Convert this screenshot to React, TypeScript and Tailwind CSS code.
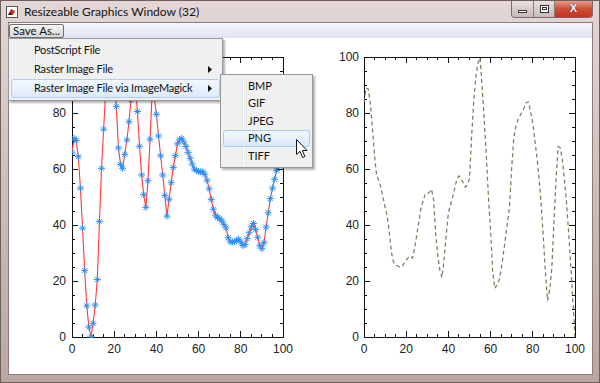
import React from "react";

type Pt = [number, number];

// keypoints read off the reference, in page x pixels → data value
const LEFT_KEYS: Pt[] = [
  [71, 66], [74, 73], [77, 66], [79, 56], [81, 43], [83, 28], [85, 15], [87, 5], [90, 0],
  [93, 7], [96, 18], [98, 34], [99, 51], [102, 69], [104, 85], [108, 102], [112, 98],
  [116, 79], [117, 69], [119, 62], [122, 60], [124, 66], [127, 73], [129, 81], [133, 95],
  [136, 83], [138, 71], [140, 60], [143, 50], [145, 46], [148, 61], [151, 88], [153, 86],
  [155, 81], [158, 70], [162, 57], [166, 43], [169, 52], [172, 60], [177, 70], [181, 71],
  [185, 68], [189, 64], [193, 60], [198, 59], [203, 59], [207, 55], [212, 46], [215, 43],
  [220, 42], [225, 39], [228, 34], [233, 34], [238, 35], [243, 32], [247, 36], [252, 41],
  [256, 37], [258, 33], [262, 31], [265, 39], [270, 51], [276, 60], [282, 67],
];

const RIGHT_KEYS: Pt[] = [
  [364, 84], [367, 91], [370, 85], [373, 72], [376, 58], [380, 55], [384, 48], [388, 42],
  [391, 31], [394, 26], [400, 25], [402, 25], [405, 27], [410, 29], [413, 28], [417, 37],
  [421, 46], [425, 51], [428, 51], [432, 53], [434, 48], [436, 35], [439, 25], [442, 21],
  [445, 31], [448, 44], [452, 49], [458, 58], [462, 56], [466, 53], [470, 57], [472, 75],
  [475, 91], [478, 98], [480, 100], [483, 85], [486, 67], [489, 46], [491, 36], [493, 21],
  [495, 17], [500, 21], [505, 34], [510, 48], [513, 70], [517, 77], [523, 81], [528, 85],
  [533, 76], [538, 61], [542, 44], [545, 25], [548, 11], [552, 25], [555, 50], [558, 68],
  [560, 68], [563, 62], [567, 46], [570, 30], [572, 19], [574, 5], [575, 0],
];

const STEP = 2.11;
const Y0 = 337;
const YS = 2.8;

function interp(keys: Pt[], px: number) {
  for (let i = 0; i < keys.length - 1; i++) {
    const [x1, v1] = keys[i];
    const [x2, v2] = keys[i + 1];
    if (px >= x1 && px <= x2) return v1 + ((px - x1) / (x2 - x1)) * (v2 - v1);
  }
  return keys[keys.length - 1][1];
}

function sample(keys: Pt[], x0: number) {
  const out: Pt[] = [];
  for (let i = 0; i <= 100; i++) {
    const px = x0 + i * STEP;
    out.push([px, Y0 - interp(keys, px) * YS]);
  }
  return out;
}

function Axes({ x0, labelEnd, skipTop }: { x0: number; labelEnd: number; skipTop?: boolean }) {
  const x1 = x0 + 100 * STEP;
  const top = Y0 - 100 * YS;
  const ticks: React.ReactNode[] = [];
  for (let t = 0; t <= 100; t += 5) {
    const major = t % 20 === 0;
    const len = major ? 6 : 3;
    const tx = x0 + t * STEP;
    const ty = Y0 - t * YS;
    ticks.push(
      <g key={t}>
        <line x1={tx} y1={Y0} x2={tx} y2={Y0 - len} />
        <line x1={tx} y1={top} x2={tx} y2={top + len} />
        <line x1={x0} y1={ty} x2={x0 + len} y2={ty} />
        <line x1={x1} y1={ty} x2={x1 - len} y2={ty} />
      </g>
    );
  }
  const labels = [0, 20, 40, 60, 80, 100];
  // the top "100" of the left plot sits under the open menu
  const yLabels = skipTop ? labels.slice(0, -1) : labels;
  return (
    <g>
      <g stroke="#111" strokeWidth={1} shapeRendering="crispEdges">
        <rect x={x0} y={top} width={x1 - x0} height={Y0 - top} fill="none" />
        {ticks}
      </g>
      <g fill="#222" fontFamily="'Liberation Sans', Arial, sans-serif" fontSize={12}>
        {labels.map((l) => (
          <text key={"x" + l} x={x0 + l * STEP} y={Y0 + 16} textAnchor="middle">
            {l}
          </text>
        ))}
        {yLabels.map((l) => (
          <text key={"y" + l} x={labelEnd} y={Y0 - l * YS + 4} textAnchor="end">
            {l}
          </text>
        ))}
      </g>
    </g>
  );
}

function Star({ x, y }: { x: number; y: number }) {
  const r = 3.5;
  const d = 2.5;
  return (
    <g>
      <line x1={x - r} y1={y} x2={x + r} y2={y} />
      <line x1={x} y1={y - r} x2={x} y2={y + r} />
      <line x1={x - d} y1={y - d} x2={x + d} y2={y + d} />
      <line x1={x - d} y1={y + d} x2={x + d} y2={y - d} />
    </g>
  );
}

function LeftPlot() {
  const pts = sample(LEFT_KEYS, 71);
  const line = pts.map((p) => p.join(",")).join(" ");
  return (
    <svg width={292} height={336} className="block">
      <defs>
        <clipPath id="clipL">
          <rect x={71} y={Y0 - 100 * YS} width={100 * STEP} height={100 * YS + 1} />
        </clipPath>
      </defs>
      <g transform="translate(-8,-38)">
        <Axes x0={71} labelEnd={65} skipTop />
        <g clipPath="url(#clipL)">
          <polyline points={line} fill="none" stroke="#ff3838" strokeWidth={1.1} />
          <g stroke="#2f8ff5" strokeWidth={1}>
            {pts.map((p, i) => (
              <Star key={i} x={p[0]} y={p[1]} />
            ))}
          </g>
        </g>
      </g>
    </svg>
  );
}

function RightPlot() {
  const pts = sample(RIGHT_KEYS, 364);
  const line = pts.map((p) => p.join(",")).join(" ");
  return (
    <svg width={293} height={336} className="block">
      <defs>
        <clipPath id="clipR">
          <rect x={364} y={Y0 - 100 * YS} width={100 * STEP} height={100 * YS + 1} />
        </clipPath>
      </defs>
      <g transform="translate(-300,-38)">
        <Axes x0={364} labelEnd={359} />
        <g clipPath="url(#clipR)">
          <polyline
            points={line}
            fill="none"
            stroke="#6f7d52"
            strokeWidth={1.2}
            strokeDasharray="4 3"
          />
        </g>
      </g>
    </svg>
  );
}

function Arrow() {
  return (
    <svg width="4" height="7" viewBox="0 0 4 7">
      <path d="M0 0 L4 3.5 L0 7 Z" fill="#111" />
    </svg>
  );
}

function MenuRow({ label, sub, active }: { label: string; sub?: boolean; active?: boolean }) {
  return (
    <div
      className={`relative flex items-center h-[19px] pl-[22px] pr-[7px] whitespace-nowrap rounded-[3px] border ${
        active
          ? "border-[#aeccf0] bg-gradient-to-b from-[#f3f8fe] to-[#dde9f9]"
          : "border-transparent"
      }`}
    >
      <span className="flex-1">{label}</span>
      {sub && <Arrow />}
    </div>
  );
}

function Cursor() {
  return (
    <svg width="13" height="20" viewBox="0 0 13 20" className="absolute left-[295px] top-[138px]">
      <path
        d="M0.5 0.5 L0.5 15.5 L4 12.3 L6.6 18.5 L8.9 17.5 L6.4 11.5 L11 11.5 Z"
        fill="#fff"
        stroke="#111"
        strokeWidth={1}
        strokeLinejoin="round"
      />
    </svg>
  );
}

export default function App() {
  const ui = "font-['Lato',sans-serif]";
  return (
    <div className="relative w-[600px] h-[383px] overflow-hidden bg-gradient-to-b from-[#e2d7d6] via-[#cdbdbb] to-[#bba6a3] border border-[#6e5f5d]">
      {/* title bar */}
      <div className="flex h-[21px] items-start">
        <div className="flex items-center h-[21px] pl-[5px] gap-[6px]">
          <svg width="12" height="12" viewBox="0 0 12 12">
            <rect x="0.5" y="0.5" width="11" height="11" fill="#fff" stroke="#555" />
            <path d="M2 9 L5 3 L9 5 L7 9 Z" fill="#d42a1e" />
            <path d="M2 9 L4 6 L6 9 Z" fill="#222" />
          </svg>
          <span className={`${ui} text-[12px] text-[#111] whitespace-nowrap`}>
            Resizeable Graphics Window (32)
          </span>
        </div>
        <div className="ml-auto mr-[6px] flex h-[18px] -mt-px border border-t-0 border-[#7b6a68] rounded-b-[4px] overflow-hidden">
          <div className="w-[22px] flex items-center justify-center bg-gradient-to-b from-[#eae3e2] to-[#c9b9b7] border-r border-[#8d7d7b]">
            <div className="w-[9px] h-[3px] bg-white border border-[#333] mt-[5px]" />
          </div>
          <div className="w-[21px] flex items-center justify-center bg-gradient-to-b from-[#eae3e2] to-[#c9b9b7] border-r border-[#8d7d7b]">
            <div className="w-[9px] h-[8px] bg-white border border-[#333] flex items-center justify-center">
              <div className="w-[5px] h-[3px] border border-[#333]" />
            </div>
          </div>
          <div className="w-[37px] flex items-center justify-center bg-gradient-to-b from-[#e8a496] via-[#cf4e38] to-[#c2331d]">
            <span className="text-white font-bold text-[11px] leading-none font-['Liberation_Sans',sans-serif] [text-shadow:0_0_1px_#000]">
              X
            </span>
          </div>
        </div>
      </div>

      {/* client */}
      <div className="ml-[7px] mr-[6px] h-[353px] border border-[#8c7b79] bg-white flex flex-col">
        <div className="h-[15px] bg-gradient-to-b from-[#f5f8fc] to-[#dbe4f2] flex items-start">
          <div
            className={`${ui} h-[14px] mt-px px-[3px] flex items-center text-[11.5px] leading-none text-[#111] whitespace-nowrap border border-[#707070] rounded-[2px] bg-gradient-to-b from-[#f4f4f4] to-[#d8d8d8]`}
          >
            Save As...
          </div>
        </div>
        <div className="flex">
          <LeftPlot />
          <RightPlot />
        </div>
      </div>

      {/* dropdown menu */}
      <div
        className={`${ui} absolute left-[7px] top-[37px] w-[215px] p-[2px] text-[11px] tracking-[-0.2px] text-[#111] bg-[#f0f0f0] border border-[#979797] shadow-[2px_2px_2px_rgba(0,0,0,0.3)]`}
      >
        <div className="absolute left-[26px] top-[2px] bottom-[2px] w-[2px] border-l border-[#e2e3e3] bg-white" />
        <MenuRow label="PostScript File" />
        <MenuRow label="Raster Image File" sub />
        <MenuRow label="Raster Image File via ImageMagick" sub active />
      </div>

      {/* sub menu */}
      <div
        className={`${ui} absolute left-[219px] top-[73px] w-[93px] p-[2px] text-[11px] text-[#111] bg-[#f0f0f0] border border-[#979797] shadow-[2px_2px_2px_rgba(0,0,0,0.3)]`}
      >
        <div className="absolute left-[21px] top-[2px] bottom-[2px] w-[2px] border-l border-[#e2e3e3] bg-white" />
        {["BMP", "GIF", "JPEG", "PNG", "TIFF"].map((l) => (
          <div
            key={l}
            className={`relative flex items-center pl-[24px] h-[17.5px] rounded-[3px] border ${
              l === "PNG"
                ? "border-[#aeccf0] bg-gradient-to-b from-[#f3f8fe] to-[#dde9f9]"
                : "border-transparent"
            }`}
          >
            {l}
          </div>
        ))}
      </div>

      <Cursor />
    </div>
  );
}
